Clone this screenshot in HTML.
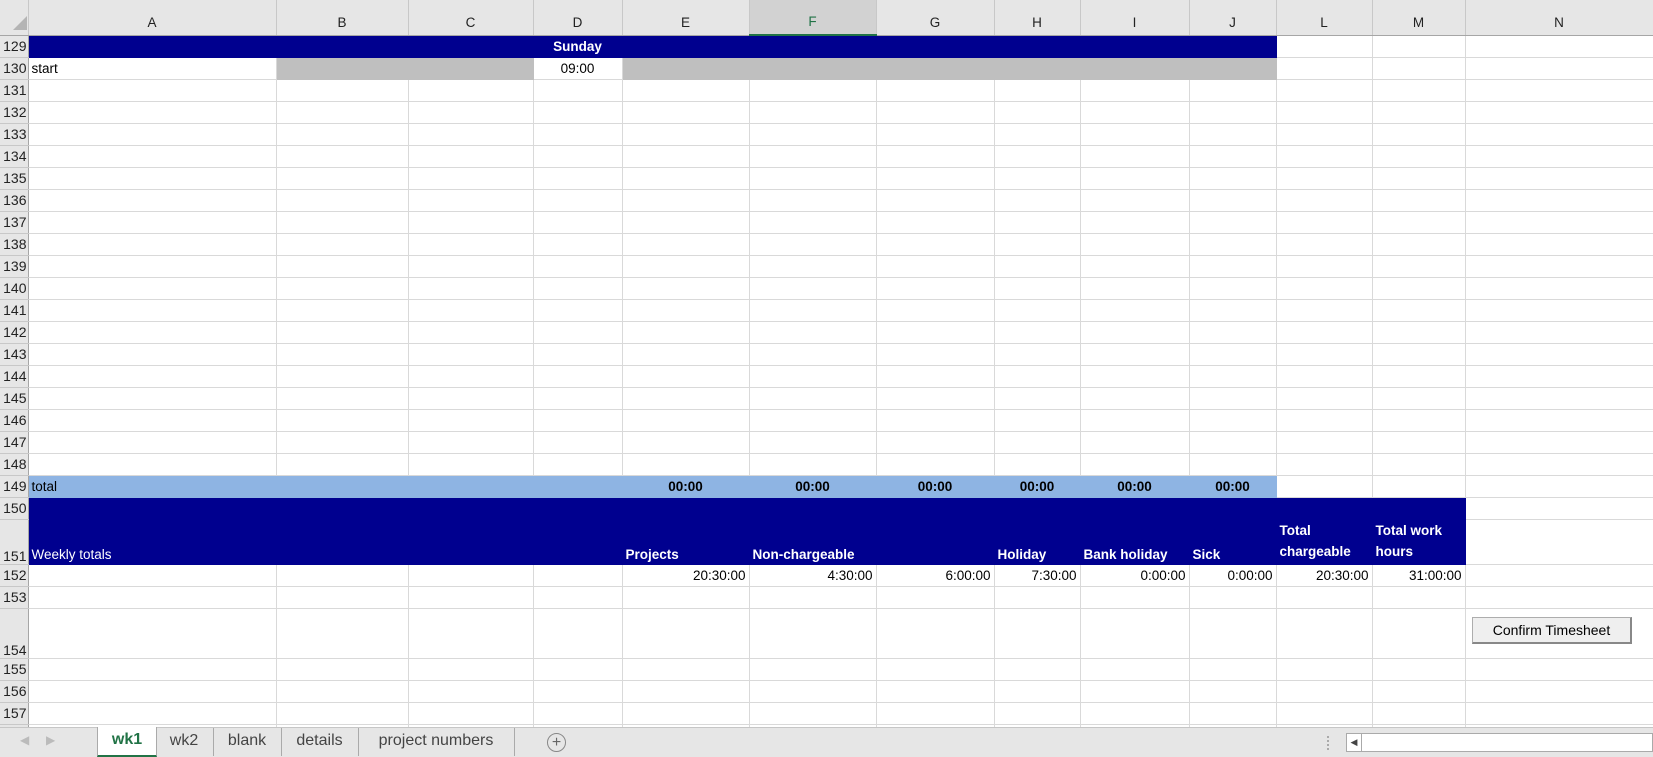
<!DOCTYPE html>
<html><head><meta charset="utf-8"><style>
body{margin:0;width:1653px;height:756px;overflow:hidden;background:#fff;font-family:"Liberation Sans",sans-serif;}
#wrap{position:absolute;left:0;top:0;width:1653px;height:727px;overflow:hidden;}
table{border-collapse:collapse;table-layout:fixed;width:1653px;}
td{border-right:1px solid #d9d9d9;border-bottom:1px solid #d9d9d9;height:22px;padding:0 3px;font-size:13.5px;color:#000;white-space:nowrap;overflow:hidden;box-sizing:border-box;}
td.rh{background:#e6e6e6;border-right:1px solid #a6a6a6;border-bottom:1px solid #c8c8c8;text-align:right;padding:0 1px 0 0;color:#222;font-size:14px;}
tr.hd td{height:35px;background:#e6e6e6;text-align:center;vertical-align:bottom;padding-bottom:5px;border-bottom:1px solid #a6a6a6;border-right:1px solid #c8c8c8;color:#222;}
tr.hd td.sel{background:#d2d2d2;border-bottom:2px solid #217346;color:#217346;}
.nv{background:#00008f;border-color:#00008f;color:#fff;}
.gr{background:#bfbfbf;border-color:#bfbfbf;}
.lb{background:#8eb4e3;border-color:#8eb4e3;}
.b{font-weight:bold;}
.c{text-align:center;}
.r{text-align:right;}
.bt{vertical-align:bottom;padding-bottom:2px;}
#tabs{position:absolute;left:0;top:727px;width:1653px;height:29px;background:#e6e6e6;border-top:1px solid #c6c6c6;font-size:16px;color:#444;}
.tab{position:absolute;top:0;height:28px;line-height:26px;text-align:center;border-right:1px solid #aaa;}
#btn{position:absolute;left:1472px;top:617px;width:160px;height:27px;background:#efefef;border:1px solid #adadad;border-right:2px solid #888;border-bottom:2px solid #888;box-sizing:border-box;font-size:14px;text-align:center;line-height:24px;}
</style></head><body>
<div id="wrap">
<table>
<colgroup><col style="width:28px"><col style="width:248px"><col style="width:132px"><col style="width:125px"><col style="width:89px"><col style="width:127px"><col style="width:127px"><col style="width:118px"><col style="width:86px"><col style="width:109px"><col style="width:87px"><col style="width:96px"><col style="width:93px"><col style="width:188px"></colgroup>
<tr class="hd"><td style="background:#e6e6e6"><svg width="14" height="14" style="display:block;margin-left:10px"><polygon points="14,0 14,14 0,14" fill="#b4b4b4"/></svg></td><td>A</td><td>B</td><td>C</td><td>D</td><td>E</td><td class="sel">F</td><td>G</td><td>H</td><td>I</td><td>J</td><td>L</td><td>M</td><td>N</td></tr>
<tr><td class="rh">129</td><td class="nv"></td><td class="nv"></td><td class="nv"></td><td class="nv b c">Sunday</td><td class="nv"></td><td class="nv"></td><td class="nv"></td><td class="nv"></td><td class="nv"></td><td class="nv"></td><td></td><td></td><td></td></tr>
<tr><td class="rh">130</td><td>start</td><td class="gr"></td><td class="gr"></td><td class="c">09:00</td><td class="gr"></td><td class="gr"></td><td class="gr"></td><td class="gr"></td><td class="gr"></td><td class="gr"></td><td></td><td></td><td></td></tr>
<tr><td class="rh">131</td><td></td><td></td><td></td><td></td><td></td><td></td><td></td><td></td><td></td><td></td><td></td><td></td><td></td></tr>
<tr><td class="rh">132</td><td></td><td></td><td></td><td></td><td></td><td></td><td></td><td></td><td></td><td></td><td></td><td></td><td></td></tr>
<tr><td class="rh">133</td><td></td><td></td><td></td><td></td><td></td><td></td><td></td><td></td><td></td><td></td><td></td><td></td><td></td></tr>
<tr><td class="rh">134</td><td></td><td></td><td></td><td></td><td></td><td></td><td></td><td></td><td></td><td></td><td></td><td></td><td></td></tr>
<tr><td class="rh">135</td><td></td><td></td><td></td><td></td><td></td><td></td><td></td><td></td><td></td><td></td><td></td><td></td><td></td></tr>
<tr><td class="rh">136</td><td></td><td></td><td></td><td></td><td></td><td></td><td></td><td></td><td></td><td></td><td></td><td></td><td></td></tr>
<tr><td class="rh">137</td><td></td><td></td><td></td><td></td><td></td><td></td><td></td><td></td><td></td><td></td><td></td><td></td><td></td></tr>
<tr><td class="rh">138</td><td></td><td></td><td></td><td></td><td></td><td></td><td></td><td></td><td></td><td></td><td></td><td></td><td></td></tr>
<tr><td class="rh">139</td><td></td><td></td><td></td><td></td><td></td><td></td><td></td><td></td><td></td><td></td><td></td><td></td><td></td></tr>
<tr><td class="rh">140</td><td></td><td></td><td></td><td></td><td></td><td></td><td></td><td></td><td></td><td></td><td></td><td></td><td></td></tr>
<tr><td class="rh">141</td><td></td><td></td><td></td><td></td><td></td><td></td><td></td><td></td><td></td><td></td><td></td><td></td><td></td></tr>
<tr><td class="rh">142</td><td></td><td></td><td></td><td></td><td></td><td></td><td></td><td></td><td></td><td></td><td></td><td></td><td></td></tr>
<tr><td class="rh">143</td><td></td><td></td><td></td><td></td><td></td><td></td><td></td><td></td><td></td><td></td><td></td><td></td><td></td></tr>
<tr><td class="rh">144</td><td></td><td></td><td></td><td></td><td></td><td></td><td></td><td></td><td></td><td></td><td></td><td></td><td></td></tr>
<tr><td class="rh">145</td><td></td><td></td><td></td><td></td><td></td><td></td><td></td><td></td><td></td><td></td><td></td><td></td><td></td></tr>
<tr><td class="rh">146</td><td></td><td></td><td></td><td></td><td></td><td></td><td></td><td></td><td></td><td></td><td></td><td></td><td></td></tr>
<tr><td class="rh">147</td><td></td><td></td><td></td><td></td><td></td><td></td><td></td><td></td><td></td><td></td><td></td><td></td><td></td></tr>
<tr><td class="rh">148</td><td></td><td></td><td></td><td></td><td></td><td></td><td></td><td></td><td></td><td></td><td></td><td></td><td></td></tr>
<tr><td class="rh">149</td><td class="lb">total</td><td class="lb"></td><td class="lb"></td><td class="lb"></td><td class="lb b c">00:00</td><td class="lb b c">00:00</td><td class="lb b c">00:00</td><td class="lb b c">00:00</td><td class="lb b c">00:00</td><td class="lb b c">00:00</td><td></td><td></td><td></td></tr>
<tr><td class="rh">150</td><td class="nv"></td><td class="nv"></td><td class="nv"></td><td class="nv"></td><td class="nv"></td><td class="nv"></td><td class="nv"></td><td class="nv"></td><td class="nv"></td><td class="nv"></td><td class="nv"></td><td class="nv"></td><td></td></tr>
<tr><td class="rh bt" style="height:44px">151</td><td class="nv bt">Weekly totals</td><td class="nv"></td><td class="nv"></td><td class="nv"></td><td class="nv b bt">Projects</td><td class="nv b bt">Non-chargeable</td><td class="nv"></td><td class="nv b bt">Holiday</td><td class="nv b bt">Bank holiday</td><td class="nv b bt">Sick</td><td class="nv b bt" style="line-height:21px">Total<br>chargeable</td><td class="nv b bt" style="line-height:21px">Total work<br>hours</td><td></td></tr>
<tr><td class="rh">152</td><td></td><td></td><td></td><td></td><td class="r">20:30:00</td><td class="r">4:30:00</td><td class="r">6:00:00</td><td class="r">7:30:00</td><td class="r">0:00:00</td><td class="r">0:00:00</td><td class="r">20:30:00</td><td class="r">31:00:00</td><td></td></tr>
<tr><td class="rh">153</td><td></td><td></td><td></td><td></td><td></td><td></td><td></td><td></td><td></td><td></td><td></td><td></td><td></td></tr>
<tr><td class="rh bt" style="height:50px">154</td><td></td><td></td><td></td><td></td><td></td><td></td><td></td><td></td><td></td><td></td><td></td><td></td><td></td></tr>
<tr><td class="rh">155</td><td></td><td></td><td></td><td></td><td></td><td></td><td></td><td></td><td></td><td></td><td></td><td></td><td></td></tr>
<tr><td class="rh">156</td><td></td><td></td><td></td><td></td><td></td><td></td><td></td><td></td><td></td><td></td><td></td><td></td><td></td></tr>
<tr><td class="rh">157</td><td></td><td></td><td></td><td></td><td></td><td></td><td></td><td></td><td></td><td></td><td></td><td></td><td></td></tr>
<tr><td class="rh">158</td><td></td><td></td><td></td><td></td><td></td><td></td><td></td><td></td><td></td><td></td><td></td><td></td><td></td></tr>
</table>
<div id="btn">Confirm Timesheet</div>
</div>
<div id="tabs">
<span style="position:absolute;left:20px;top:5px;color:#bbb;font-size:12px">&#9664;</span>
<span style="position:absolute;left:46px;top:5px;color:#bbb;font-size:12px">&#9654;</span>
<div class="tab" style="left:97px;width:58px;background:#fff;color:#217346;font-weight:bold;border-left:1px solid #aaa;border-bottom:2px solid #217346;top:-1px">wk1</div>
<div class="tab" style="left:155px;width:58px">wk2</div>
<div class="tab" style="left:213px;width:68px">blank</div>
<div class="tab" style="left:281px;width:77px">details</div>
<div class="tab" style="left:358px;width:156px">project numbers</div>
<div style="position:absolute;left:547px;top:5px;width:17px;height:17px;border:1px solid #888;border-radius:50%;text-align:center;line-height:17px;color:#666;font-size:16px">+</div>
<div style="position:absolute;left:1327px;top:8px;width:2px;height:14px;border-left:2px dotted #aaa"></div>
<div style="position:absolute;left:1346px;top:5px;width:307px;height:19px;background:#fff;border:1px solid #aaa;box-sizing:border-box"></div>
<div style="position:absolute;left:1346px;top:5px;width:16px;height:19px;border:1px solid #aaa;box-sizing:border-box;background:#fff;font-size:9px;line-height:17px;text-align:center;color:#444">&#9664;</div>
</div>
</body></html>
